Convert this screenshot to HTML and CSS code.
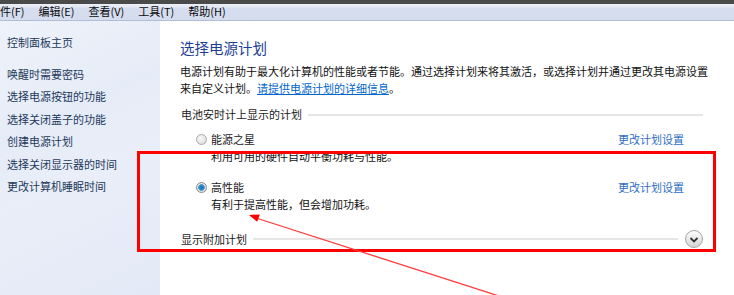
FILE: index.html
```html
<!DOCTYPE html>
<html lang="zh-CN">
<head>
<meta charset="utf-8">
<title>电源选项</title>
<link rel="stylesheet" href="styles.css">
</head>
<body>
<div class="window">
  <div class="topstrip"></div>
  <div class="menubar">
    <span class="menu-item">件(F)</span>
    <span class="menu-item">编辑(E)</span>
    <span class="menu-item">查看(V)</span>
    <span class="menu-item">工具(T)</span>
    <span class="menu-item">帮助(H)</span>
  </div>
  <div class="content">
    <aside class="sidebar">
      <a class="side-link home">控制面板主页</a>
      <a class="side-link">唤醒时需要密码</a>
      <a class="side-link">选择电源按钮的功能</a>
      <a class="side-link">选择关闭盖子的功能</a>
      <a class="side-link">创建电源计划</a>
      <a class="side-link">选择关闭显示器的时间</a>
      <a class="side-link">更改计算机睡眠时间</a>
    </aside>
    <main class="main">
      <h1 class="title">选择电源计划</h1>
      <p class="desc">电源计划有助于最大化计算机的性能或者节能。通过选择计划来将其激活，或选择计划并通过更改其电源设置<br>来自定义计划。<a class="link">请提供电源计划的详细信息</a>。</p>
      <div class="section-head"><span>电池安时计上显示的计划</span><span class="rule"></span></div>
      <div class="plan">
        <div class="plan-row">
          <span class="radio"></span><span class="plan-name">能源之星</span>
          <a class="plan-link">更改计划设置</a>
        </div>
        <div class="plan-desc">利用可用的硬件自动平衡功耗与性能。</div>
      </div>
      <div class="plan plan-second">
        <div class="plan-row">
          <span class="radio checked"></span><span class="plan-name">高性能</span>
          <a class="plan-link">更改计划设置</a>
        </div>
        <div class="plan-desc">有利于提高性能，但会增加功耗。</div>
      </div>
      <div class="section-head more"><span>显示附加计划</span><span class="rule"></span>
        <span class="chevron"><svg width="10" height="8" viewBox="0 0 10 8"><path d="M1.5 2 L5 5.5 L8.5 2" fill="none" stroke="#333" stroke-width="1.8"/></svg></span>
      </div>
    </main>
  </div>
  <div class="highlight"></div>
  <svg class="arrow" width="734" height="295" viewBox="0 0 734 295">
    <line x1="499" y1="296" x2="256" y2="218" stroke="#ff3b3b" stroke-width="1.3"/>
    <polygon points="249,215 257.2,221.8 259.8,214.4" fill="#ff0000"/>
  </svg>
</div>
</body>
</html>
```
FILE: styles.css
```css
* { box-sizing: border-box; }
html, body { margin: 0; padding: 0; }
body {
  width: 734px;
  height: 295px;
  overflow: hidden;
  font-family: "Noto Sans CJK SC", "Noto Sans", sans-serif;
  font-size: 11px;
  color: #1a1a1a;
  background: #fff;
}
.window {
  position: relative;
  width: 734px;
  height: 295px;
  display: flex;
  flex-direction: column;
}
.topstrip {
  height: 4px;
  background: #4a4a4a;
}
.menubar {
  height: 17px;
  display: flex;
  align-items: center;
  gap: 14px;
  padding-bottom: 1px;
  background: linear-gradient(#eceff6 0, #e4e8f3 3px, #d6ddef 4px, #d5dcee 100%);
  border-bottom: 1px solid #b3bcd6;
  color: #0a0a0a;
  line-height: 15px;
}
.content {
  flex: 1;
  display: flex;
  min-height: 0;
}
.sidebar {
  width: 160px;
  flex-shrink: 0;
  padding: 10px 0 0 7px;
  display: flex;
  flex-direction: column;
  background: linear-gradient(155deg, #eef2fa 0%, #e6ecf7 35%, #e9eef8 55%, #e3e9f6 100%);
}
.side-link {
  line-height: 22.4px;
  color: #1e395b;
  white-space: nowrap;
}
.side-link.home { margin-bottom: 9.6px; }
.main {
  flex: 1;
  min-width: 0;
  padding: 17px 31px 0 20px;
  background: #fff;
}
.title {
  margin: 0;
  font-size: 14.5px;
  font-weight: normal;
  line-height: 20px;
  color: #1e3e94;
}
.desc {
  margin: 5px 0 0;
  line-height: 17px;
  color: #111;
  white-space: nowrap;
}
.link {
  color: #0066cc;
  text-decoration: underline;
}
.section-head {
  display: flex;
  align-items: center;
  margin-top: 9px;
  line-height: 17px;
  color: #1a1a1a;
  padding-left: 1px;
}
.rule {
  flex: 1;
  height: 2px;
  margin-left: 6px;
  background: #e6e6e6;
}
.plan { margin-top: 8px; }
.plan-second { margin-top: 14px; }
.plan-row {
  display: flex;
  align-items: center;
  line-height: 17px;
  padding-left: 16px;
  padding-right: 19px;
}
.radio {
  width: 11px;
  height: 11px;
  border-radius: 50%;
  border: 1px solid #a9a9a9;
  background: radial-gradient(circle at 40% 35%, #fafafa 0, #e4e4e4 60%, #cfcfcf 100%);
  margin-right: 4px;
}
.radio.checked {
  border-color: #8a8a8a;
  background: radial-gradient(circle at 50% 50%, #1b6fb5 0, #2b86c9 2px, #4a97c8 3px, #e6e6e6 3.6px, #d2d2d2 100%);
}
.plan-name { flex: 1; }
.plan-link { color: #2f6ec2; }
.plan-desc {
  line-height: 17px;
  padding-left: 31px;
  color: #111;
}
.section-head.more { margin-top: 17px; }
.section-head.more .rule { margin-right: 7px; }
.chevron {
  width: 18px;
  height: 18px;
  border-radius: 50%;
  border: 1px solid #a5a5a5;
  background: linear-gradient(#ffffff, #e9e9e9 50%, #d4d4d4);
  display: flex;
  align-items: center;
  justify-content: center;
  padding-top: 1px;
}
.highlight {
  position: absolute;
  left: 137px;
  top: 151px;
  width: 579px;
  height: 101px;
  border: 3px solid #ff0000;
  pointer-events: none;
}
.arrow {
  position: absolute;
  left: 0;
  top: 0;
  pointer-events: none;
}
```
